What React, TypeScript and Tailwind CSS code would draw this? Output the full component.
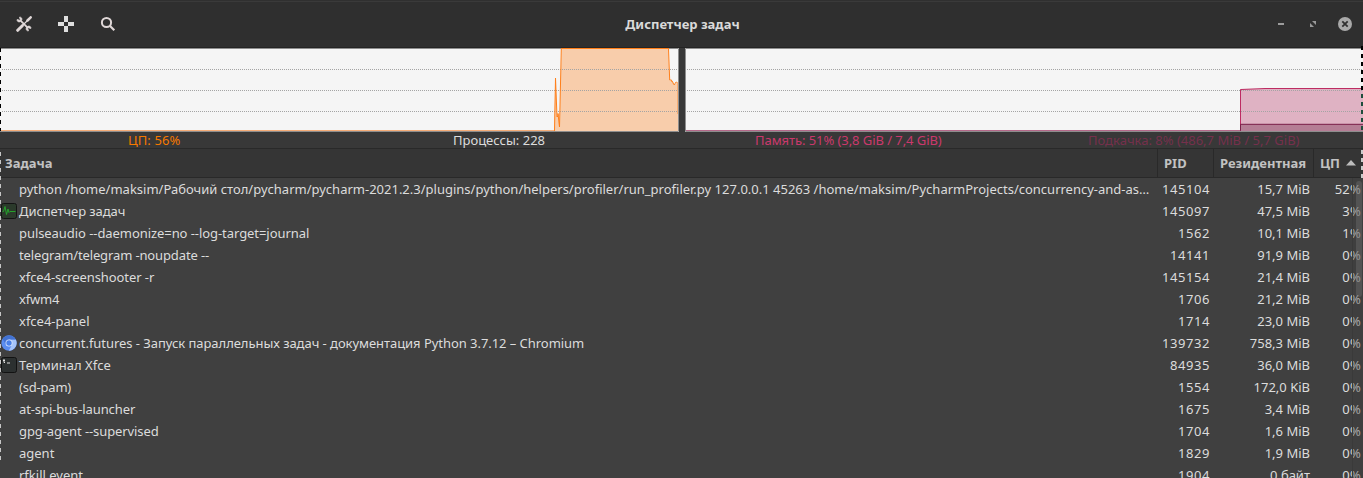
import type { ReactNode } from "react";

type Task = { name: string; pid: string; mem: string; cpu: string; icon?: "monitor" | "chromium" | "terminal"; track?: string };

const tasks: Task[] = [
  { name: "python /home/maksim/Рабочий стол/pycharm/pycharm-2021.2.3/plugins/python/helpers/profiler/run_profiler.py 127.0.0.1 45263 /home/maksim/PycharmProjects/concurrency-and-as…", pid: "145104", mem: "15,7 MiB", cpu: "52%" },
  { name: "Диспетчер задач", pid: "145097", mem: "47,5 MiB", cpu: "3%", icon: "monitor", track: "tracking-[-0.07px]" },
  { name: "pulseaudio --daemonize=no --log-target=journal", pid: "1562", mem: "10,1 MiB", cpu: "1%", track: "tracking-[-0.065px]" },
  { name: "telegram/telegram -noupdate --", pid: "14141", mem: "91,9 MiB", cpu: "0%", track: "tracking-[-0.13px]" },
  { name: "xfce4-screenshooter -r", pid: "145154", mem: "21,4 MiB", cpu: "0%", track: "tracking-[-0.09px]" },
  { name: "xfwm4", pid: "1706", mem: "21,2 MiB", cpu: "0%", track: "tracking-[-0.2px]" },
  { name: "xfce4-panel", pid: "1714", mem: "23,0 MiB", cpu: "0%" },
  { name: "concurrent.futures - Запуск параллельных задач - документация Python 3.7.12 – Chromium", pid: "139732", mem: "758,3 MiB", cpu: "0%", icon: "chromium", track: "tracking-[-0.047px]" },
  { name: "Терминал Xfce", pid: "84935", mem: "36,0 MiB", cpu: "0%", icon: "terminal" },
  { name: "(sd-pam)", pid: "1554", mem: "172,0 KiB", cpu: "0%", track: "tracking-[-0.2px]" },
  { name: "at-spi-bus-launcher", pid: "1675", mem: "3,4 MiB", cpu: "0%", track: "tracking-[-0.1px]" },
  { name: "gpg-agent --supervised", pid: "1704", mem: "1,6 MiB", cpu: "0%", track: "tracking-[-0.1px]" },
  { name: "agent", pid: "1829", mem: "1,9 MiB", cpu: "0%" },
  { name: "rfkill event", pid: "1904", mem: "0 байт", cpu: "0%" },
];

function TaskIcon({ kind }: { kind: Task["icon"] }) {
  if (kind === "monitor")
    return (
      <svg width="16" height="16" viewBox="0 0 16 16">
        <rect x=".5" y=".5" width="15" height="15" rx="2" fill="#2b3a2b" stroke="#141414" />
        <path d="M1.5 8.5h1l1.5-5 1.5 8L7 6l1 3.5 1-1h5.5" fill="none" stroke="#25a22b" />
      </svg>
    );
  if (kind === "chromium")
    return (
      <svg width="16" height="16" viewBox="0 0 16 16">
        <circle cx="8" cy="8" r="7.7" fill="#5b8def" />
        <path d="M8 4.5h6.8A7.7 7.7 0 0 1 7.8 15.7L11 9.8z" fill="#a5c4fb" />
        <path d="M1.6 4A7.7 7.7 0 0 1 14.8 4.5H8L4.8 9.5z" fill="#4373d3" />
        <circle cx="8" cy="8" r="3.5" fill="#dce8fd" />
        <circle cx="8" cy="8" r="2.7" fill="#4a80e8" />
      </svg>
    );
  if (kind === "terminal")
    return (
      <svg width="16" height="16" viewBox="0 0 16 16">
        <rect x=".5" y=".5" width="15" height="15" rx="2" fill="#2c3030" stroke="#121212" />
        <path d="M2 3.5h2M3 2v3.5M3 5.5h1M6 6h3" fill="none" stroke="#e0e0e0" />
      </svg>
    );
  return null;
}

function Grid() {
  return (
    <g stroke="#a4a4a4" strokeDasharray="1 1">
      <path d="M0 21.5H680M0 42.5H680M0 63.5H680" />
    </g>
  );
}

function CpuGraph() {
  return (
    <svg width="679" height="84" viewBox="0 0 679 84" className="block">
      <rect width="679" height="84" fill="#f5f5f5" />
      <path d="M554 83L555.5 30L557 69L558 65L559.5 79L561.5 0H668.5L669.5 32L672 33L674 36L675 37L677 34L678 36V83z" fill="#f8cdab" />
      <Grid />
      <path d="M0 .5H678.5V83.5H0" fill="none" stroke="#8e8e8e" />
      <path d="M554.5 83L555.5 30L557 69L558 68V65.500L559.5 79L561.3 .5H668.5L669.7 32H671.5L672 34L672.5 33.500L673.5 36L674.5 37L675.5 34.500L676.5 34L677.5 35" fill="none" stroke="#ff7f1a" />
      <path d="M677.500 35V66" stroke="#f9ae73" />
      <path d="M0 82.5H554" stroke="#f6ad78" />
    </svg>
  );
}

function MemoryGraph() {
  return (
    <svg width="678" height="84" viewBox="0 0 678 84" className="block">
      <rect width="678" height="84" fill="#f5f5f5" />
      <path d="M555.5 83V41H678V83z" fill="#dfb2c3" />
      <path d="M555.5 83V76H678V83z" fill="#b57e95" />
      <Grid />
      <path d="M0 82.5H555.5V41.500L580 40.5H678" fill="none" stroke="#bd2c62" />
      <path d="M0 82.5H555.5V76.300H678" fill="none" stroke="#7b2049" />
      <path d="M0 82.5H555" stroke="#b5698a" />
      <path d="M678 .5H.5V83.5H678" fill="none" stroke="#8e8e8e" />
    </svg>
  );
}

function HeadCell({ children, className }: { children: ReactNode; className: string }) {
  return <div className={`flex h-full items-center border-[#292929] ${className}`}>{children}</div>;
}

function SelectionEdges() {
  return (
    <div className="pointer-events-none">
      <div className="absolute top-12 left-0 h-[83px] w-px bg-[repeating-linear-gradient(to_bottom,#000_0_4px,#f5f5f5_4px_8px)]" />
      <div className="absolute top-[152px] left-0 h-[308px] w-px bg-[repeating-linear-gradient(to_bottom,#c6c6c6_0_4px,transparent_4px_8px)]" />
      <div className="absolute top-[46px] right-0 h-[48px] w-[2px] bg-[repeating-linear-gradient(to_bottom,#000_0_4px,transparent_4px_8px)]" />
      <div className="absolute top-[94px] right-0 h-[36px] w-[2px] bg-[repeating-linear-gradient(to_bottom,#214d3c_0_4px,transparent_4px_8px)]" />
      <div className="absolute top-[150px] right-0 h-[28px] w-[2px] bg-[repeating-linear-gradient(to_bottom,#cacaca_0_4px,transparent_4px_8px)]" />
      <div className="absolute top-[178px] right-0 h-[300px] w-[11px] border-l border-[#3a3a3a] bg-[#404040]/35" />
      <div className="absolute top-[181px] right-[1px] h-[116px] w-[6px] rounded-full bg-[#777]/35" />
    </div>
  );
}

export default function App() {
  return (
    <div className="relative flex h-[478px] w-[1363px] flex-col overflow-hidden bg-[#404040] font-['Noto_Sans',sans-serif] text-[13px] leading-[22px] whitespace-nowrap text-[#dcdcdc]">
      <header className="grid h-12 shrink-0 grid-cols-3 items-center border-b border-[#242424] bg-[#2f2f2f] pt-px shadow-[inset_0_1px_#303030,inset_0_2px_#3a3a3a]">
        <div className="flex items-center gap-[26px] pl-4">
          <svg width="16" height="16" viewBox="0 0 16 16" fill="none" stroke="#e0d8d8">
            <path d="M4.800 4.800l7 7" strokeWidth="1.800" />
            <path d="M3.500 1.200l.8 2.600-.5.500-2.600-.8C.6 5.200 2.500 6.400 4.200 5.700L5.700 4.200C6.400 2.500 5.200.8 3.500 1.200z" fill="#e0d8d8" strokeWidth=".8" />
            <path d="M12.500 14.800l-.8-2.600.5-.5 2.600.8c.6-1.700-1.300-2.900-3-2.200l-1.500 1.500c-.7 1.700.5 3.400 2.200 3z" fill="#e0d8d8" strokeWidth=".8" />
            <path d="M1.700 14.300L6.300 9.700" strokeWidth="3" strokeLinecap="round" />
            <path d="M6 10L12 4" strokeWidth="1.200" />
            <path d="M11.500 4.500L14.700 1.300" strokeWidth="2.500" strokeLinecap="round" />
          </svg>
          <svg width="16" height="16" viewBox="0 0 16 16" fill="#dedede">
            <path d="M6 0h4v6H6zM6 10h4v6H6zM0 6h6v4H0zM10 6h6v4h-6z" />
          </svg>
          <svg width="16" height="16" viewBox="0 0 16 16" fill="none" stroke="#e0d8d8">
            <circle cx="6.500" cy="6.500" r="4.600" strokeWidth="2" />
            <path d="M10 10l4.300 4.300" strokeWidth="2.200" />
          </svg>
        </div>
        <h1 className="pl-[2px] text-center font-bold text-[#dadada]">Диспетчер задач</h1>
        <div className="flex items-center justify-end gap-[18px] pr-[11px]">
          <svg width="14" height="14" viewBox="0 0 14 14"><path d="M4 6h6v2H4z" fill="#9c9c9c" /></svg>
          <svg width="14" height="14" viewBox="0 0 14 14"><path d="M6 4h4v4zM4 6l4 4H4z" fill="#999" /></svg>
          <svg width="14" height="14" viewBox="0 0 14 14">
            <circle cx="7" cy="7" r="7" fill="#a9a9a9" />
            <path d="M4.300 4.300l5.400 5.400M9.700 4.300L4.300 9.700" stroke="#303030" strokeWidth="1.800" />
          </svg>
        </div>
      </header>
      <section className="flex h-[84px] shrink-0 justify-between bg-[#383838]">
        <CpuGraph />
        <MemoryGraph />
      </section>
      <section className="flex h-4 shrink-0 items-center bg-[#383838] pl-[128px] leading-4">
        <span className="w-[325px] tracking-[0.1px] text-[#f57900]">ЦП: 56%</span>
        <span className="w-[302px]">Процессы: 228</span>
        <span className="w-[333px] tracking-[-0.06px] text-[#cb386c]">Память: 51% (3,8 GiB / 7,4 GiB)</span>
        <span className="text-[#75304c]">Подкачка: 8% (486,7 MiB / 5,7 GiB)</span>
      </section>
      <section className="grid h-[30px] shrink-0 grid-cols-[1158px_56px_100px_49px] items-center border-y border-[#292929] bg-[#353535] font-bold text-[#c2c2c2]">
        <HeadCell className="border-r pl-[5px]">Задача</HeadCell>
        <HeadCell className="border-r pl-[6px]">PID</HeadCell>
        <HeadCell className="border-r pl-[6px]">Резидентная</HeadCell>
        <HeadCell className="gap-[6px] pl-[6px]">
          ЦП
          <svg width="10" height="6" viewBox="0 0 10 6"><path d="M0 5.500L5 0l5 5.500z" fill="#bdbdbd" /></svg>
        </HeadCell>
      </section>
      <main className="flex flex-col">
        {tasks.map((t) => (
          <div key={t.pid} className="grid h-[22px] shrink-0 grid-cols-[1158px_56px_100px_49px] items-center">
            <div className="flex items-center pl-px">
              <span className="flex w-[18px] shrink-0"><TaskIcon kind={t.icon} /></span>
              <span className={t.track}>{t.name}</span>
            </div>
            <span className="pr-[4px] text-right tracking-[0.55px]">{t.pid}</span>
            <span className="pr-[4px] text-right">{t.mem}</span>
            <span className="pr-[2px] text-right tracking-[0.2px]">{t.cpu}</span>
          </div>
        ))}
      </main>
      <SelectionEdges />
    </div>
  );
}
